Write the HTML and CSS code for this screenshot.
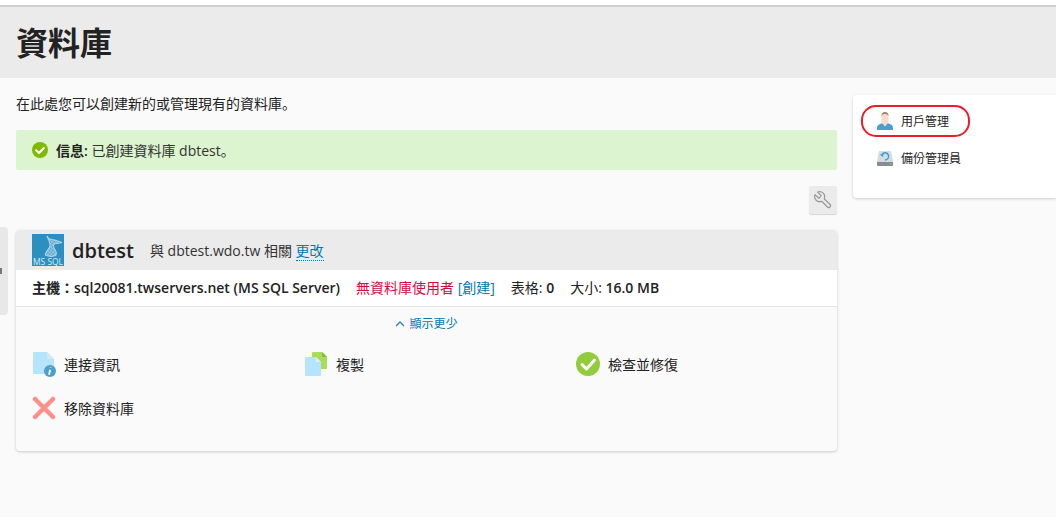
FILE: index.html
```html
<!DOCTYPE html>
<html>
<head>
<meta charset="utf-8">
<title>資料庫</title>
<link rel="stylesheet" href="styles.css">
</head>
<body>
<div class="topbar"></div>
<header class="page-head"><h1>資料庫</h1></header>
<div class="side-tab"><span class="side-tab-mark"></span></div>
<div class="columns">
  <main class="main">
    <p class="intro">在此處您可以創建新的或管理現有的資料庫。</p>
    <div class="msg">
      <svg class="msg-icon" viewBox="0 0 16 16" width="16" height="16"><circle cx="8" cy="8" r="8" fill="#7fba00"/><path d="M4.2 8.2 7 11l4.8-5" fill="none" stroke="#fff" stroke-width="2" stroke-linecap="round" stroke-linejoin="round"/></svg>
      <span><b class="msg-label">信息:</b> 已創建資料庫 dbtest。</span>
    </div>
    <div class="tools">
      <button class="tool-btn" type="button" aria-label="工具">
        <svg viewBox="0 0 24 24" width="20" height="20"><path transform="translate(24 0) scale(-1 1)" d="M14.700 6.300a1 1 0 0 0 0 1.400l1.600 1.600a1 1 0 0 0 1.400 0l3.770-3.770a6 6 0 0 1-7.940 7.940l-6.910 6.910a2.120 2.120 0 0 1-3-3l6.910-6.910a6 6 0 0 1 7.940-7.940l-3.760 3.760z" fill="none" stroke="#999" stroke-width="1.500" stroke-linejoin="round"/></svg>
      </button>
    </div>
    <section class="card">
      <div class="card-head">
        <svg class="db-logo" viewBox="0 0 32 32" width="32" height="32">
          <defs><pattern id="hatch" width="2.500" height="2.500" patternUnits="userSpaceOnUse" patternTransform="rotate(40)"><rect width="2.500" height="2.500" fill="#5fa9cf"/><path d="M0 0h2.500M0 0v2.500" stroke="#cfe7f3" stroke-width=".7"/></pattern></defs>
          <rect width="32" height="32" fill="#2b8fc0"/>
          <path d="M15 2c1 3 4 3.500 8 4l7 2.500-5 1c-3 0-4 1.500-3 4.500 2 3 3 5 2 7.500-4 1.500-8 1-11-.5 1-4 4-6 5-9.500 0-3.500-2-6-3-9.500z" fill="url(#hatch)" stroke="#d8ecf5" stroke-width=".7"/>
          <text x="1" y="30.500" class="db-logo-text" textLength="30" lengthAdjust="spacingAndGlyphs">MS SQL</text>
        </svg>
        <span class="db-name">dbtest</span>
        <span class="db-rel">與 dbtest.wdo.tw 相關 <a class="dotted" href="#">更改</a></span>
      </div>
      <div class="card-info">
        <span class="host">主機：sql20081.twservers.net (MS SQL Server)</span>
        <span class="nouser"><span class="red">無資料庫使用者</span> <a href="#">[創建]</a></span>
        <span class="stat">表格: <b>0</b></span>
        <span class="stat">大小: <b>16.0 MB</b></span>
      </div>
      <div class="toggle"><a href="#"><svg viewBox="0 0 10 6" width="10" height="6"><path d="M1 5l4-4 4 4" fill="none" stroke="#2a85b0" stroke-width="1.300"/></svg>顯示更少</a></div>
      <div class="actions">
        <a class="action" href="#">
          <svg viewBox="0 0 24 26" width="24" height="26"><path d="M2 1h13l7 7v14a1 1 0 0 1-1 1H2a1 1 0 0 1-1-1V2a1 1 0 0 1 1-1z" fill="#b5e5fd"/><path d="M15 1l7 7h-7z" fill="#d9e6ee"/><circle cx="18" cy="20" r="6" fill="#4f9fcb"/><path d="M18.600 16.400v.6M18.100 18.800l-1 5" stroke="#fff" stroke-width="1.800"/></svg>
          <span>連接資訊</span>
        </a>
        <a class="action" href="#">
          <svg viewBox="0 0 24 26" width="24" height="26"><path d="M9 1h9l5 5v11a1 1 0 0 1-1 1H9a1 1 0 0 1-1-1V2a1 1 0 0 1 1-1z" fill="#a8dc5a"/><path d="M18 1l5 5h-5z" fill="#84b93e"/><path d="M2 6h10l5 5v13a1 1 0 0 1-1 1H2a1 1 0 0 1-1-1V7a1 1 0 0 1 1-1z" fill="#b5e5fd"/><path d="M12 6l5 5h-5z" fill="#e2eef5"/></svg>
          <span>複製</span>
        </a>
        <a class="action" href="#">
          <svg viewBox="0 0 24 24" width="24" height="24"><circle cx="12" cy="12" r="12" fill="#92cc3c"/><path d="M6 12.500l4.500 4.500 8-9" fill="none" stroke="#fff" stroke-width="3" stroke-linecap="round" stroke-linejoin="round"/></svg>
          <span>檢查並修復</span>
        </a>
        <a class="action" href="#">
          <svg viewBox="0 0 24 24" width="24" height="24"><path d="M3 3l18 18M21 3L3 21" stroke="#ff8f88" stroke-width="4.500" stroke-linecap="round"/></svg>
          <span>移除資料庫</span>
        </a>
      </div>
    </section>
  </main>
  <aside class="side">
    <a class="side-link is-circled" href="#">
      <svg viewBox="0 0 16 18" width="16" height="18"><path d="M0 18v-2c0-3 3-4 5.500-5h5c2.500 1 5.500 2 5.500 5v2z" fill="#4a9fcf"/><path d="M5 11h6l-3 3.500z" fill="#f8dccb"/><rect x="4.500" y="0" width="7" height="12" rx="3.200" fill="#f8dccb"/><path d="M4.500 4C4.500 1 6 0 8 0s3.500 1 3.500 4C10.500 2.500 9.500 2 8 2s-2.500.5-3.500 2z" fill="#9a8675"/></svg>
      <span>用戶管理</span>
    </a>
    <a class="side-link" href="#">
      <svg viewBox="0 0 16 15" width="16" height="15"><path d="M2 0h12l2 10v2H0v-2z" fill="#d3dce0"/><path d="M0 11h16v3a1 1 0 0 1-1 1H1a1 1 0 0 1-1-1z" fill="#838e93"/><circle cx="13.500" cy="13" r=".8" fill="#a5d13c"/><path d="M5 3.500a3.600 3.600 0 1 1 3 5.500" fill="none" stroke="#3a9bd0" stroke-width="1.400"/><path d="M3 3.300h4L5.300 6z" fill="#3a9bd0"/></svg>
      <span>備份管理員</span>
    </a>
  </aside>
</div>
</body>
</html>
```

FILE: styles.css
```css
* { box-sizing: border-box; }
html, body { margin: 0; height: 100%; overflow: hidden; }
body {
  background: #fafafa;
  color: #222;
  font-family: "Open Sans", "Noto Sans CJK JP", sans-serif;
  font-size: 14px;
  position: relative;
}
a { color: #007ab0; text-decoration: none; }
.topbar { height: 7px; background: #fff; border-bottom: 2px solid #cfcfcf; }
.page-head { height: 71px; background: #ebebeb; padding: 0 16px; display: flex; align-items: center; }
.page-head h1 { margin: 0; font-size: 32px; line-height: 40px; font-weight: 700; color: #222; }
.side-tab { position: absolute; left: 0; top: 227px; width: 8px; height: 88px; background: #e8e8e8; border-radius: 0 4px 4px 0; }
.side-tab-mark { position: absolute; left: 0; top: 41px; width: 2px; height: 6px; background: #777; }
.columns { display: flex; gap: 16px; padding: 0 0 0 16px; }
.main { width: 821px; padding-top: 16px; }
.intro { margin: 0; line-height: 20px; color: #222; }
.msg { margin-top: 16px; height: 40px; background: #dcf4cf; border-radius: 2px; padding: 0 16px 1px; display: flex; align-items: center; gap: 8px; color: #333; }
.msg-icon { margin-top: 1px; }
.msg-label { font-weight: 600; color: #222; }
.tools { display: flex; justify-content: flex-end; margin-top: 16px; }
.tool-btn { width: 28px; height: 28px; padding: 0; border: 0; border-radius: 2px; background: #ebebeb; box-shadow: 0 1px 1px rgba(0,0,0,.15); display: flex; align-items: center; justify-content: center; }
.card { margin-top: 16px; height: 221px; border-radius: 4px; background: #fafafa; box-shadow: 0 1px 3px rgba(0,0,0,.2); }
.card-head { height: 40px; background: #ebebeb; border-radius: 4px 4px 0 0; padding: 4px 16px; display: flex; align-items: center; }
.db-logo { flex: none; }
.db-logo-text { font-family: "Open Sans", sans-serif; font-size: 9px; fill: #d6edf8; }
.db-name { margin-left: 8px; font-size: 20px; font-weight: 600; color: #222; }
.db-rel { margin-left: 16px; color: #333; }
.dotted { border-bottom: 1px dotted #007ab0; }
.card-info { height: 37px; background: #fff; border-bottom: 1px solid #e6e6e6; padding: 0 16px 2px; display: flex; align-items: center; }
.host { font-weight: 600; }
.nouser { margin-left: 16px; }
.red { color: #d3093f; }
.stat { margin-left: 16px; }
.stat b { font-weight: 600; }
.toggle { margin-top: 8px; text-align: center; font-size: 12px; line-height: 16px; }
.toggle a { display: inline-flex; align-items: center; gap: 4px; }
.actions { display: grid; grid-template-columns: repeat(3, 272px); row-gap: 20px; padding: 20px 16px 0; }
.action { display: flex; align-items: center; gap: 8px; height: 24px; color: #222; }
.side { flex: 1; margin-top: 17px; height: 103px; background: #fff; border-radius: 4px 0 0 4px; box-shadow: 0 1px 3px rgba(0,0,0,.18); padding: 10px 8px; display: flex; flex-direction: column; gap: 5px; }
.side-link { display: flex; align-items: center; gap: 8px; height: 32px; width: 109px; padding-left: 16px; color: #222; font-size: 12px; }
.is-circled { border: 2px solid #ec1c2c; border-radius: 15px; padding-left: 14px; }
```
